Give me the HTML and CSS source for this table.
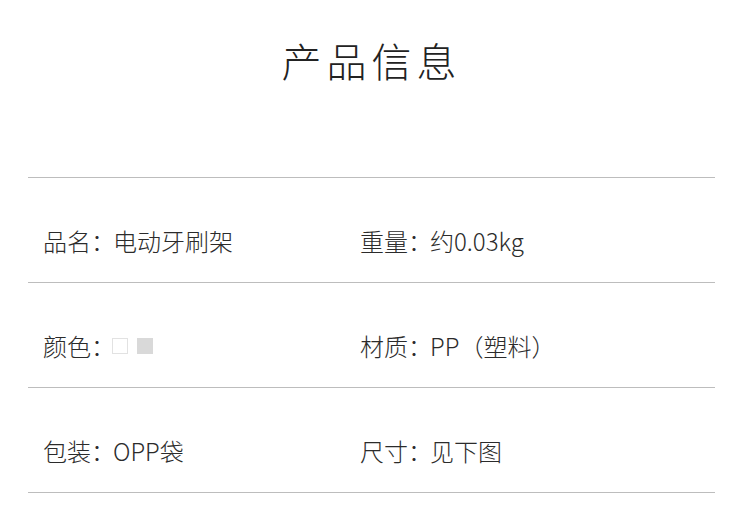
FILE: index.html
```html
<!DOCTYPE html>
<html lang="zh-CN">
<head>
<meta charset="utf-8">
<link rel="stylesheet" href="styles.css">
</head>
<body>
<div class="page">
  <h1 class="title">产品信息</h1>
  <div class="table">
    <div class="row">
      <div class="cell">品名<span class="colon">：</span>电动牙刷架</div>
      <div class="cell">重量<span class="colon">：</span>约0.03kg</div>
    </div>
    <div class="row">
      <div class="cell">颜色<span class="colon">：</span><span class="swatch white"></span><span class="swatch gray"></span></div>
      <div class="cell">材质<span class="colon">：</span>PP（塑料）</div>
    </div>
    <div class="row">
      <div class="cell">包装<span class="colon">：</span>OPP袋</div>
      <div class="cell">尺寸<span class="colon">：</span>见下图</div>
    </div>
  </div>
</div>
</body>
</html>
```
FILE: styles.css
```css
html, body {
  margin: 0;
  padding: 0;
  background: #fff;
}
.page {
  width: 750px;
  padding: 0 35px 0 28px;
  box-sizing: border-box;
  font-family: "Noto Sans CJK SC", "Noto Sans", sans-serif;
  color: #2a2a2a;
}
.title {
  margin: 0;
  height: 177px;
  box-sizing: border-box;
  padding-top: 38px;
  text-align: center;
  font-size: 40px;
  line-height: 44px;
  font-weight: 200;
  letter-spacing: 5px;
  color: #222;
}
.table {
  border-top: 1px solid #bdbdbd;
}
.row {
  display: grid;
  grid-template-columns: 317px 1fr;
  align-items: start;
  height: 105px;
  box-sizing: border-box;
  border-bottom: 1px solid #bdbdbd;
  padding: 51px 0 0 15px;
}
.cell {
  font-size: 24px;
  line-height: 24px;
  height: 24px;
  font-weight: 300;
  color: #2b2b2b;
  display: flex;
  align-items: center;
  white-space: nowrap;
}
.colon {
  margin-right: -2px;
}
.swatch {
  display: inline-block;
  width: 16px;
  height: 16px;
  box-sizing: border-box;
  margin-right: 9px;
}
.swatch.white {
  border: 1px solid #e2e2e2;
  background: #fff;
  margin-left: -1px;
}
.swatch.gray {
  background: #d9d9d9;
}
```
